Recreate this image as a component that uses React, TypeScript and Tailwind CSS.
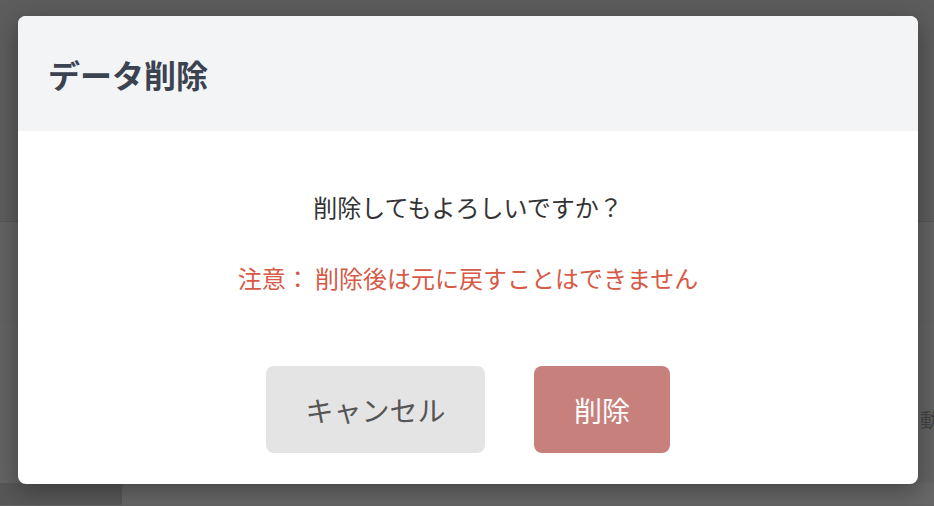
const jp = { fontFamily: '"Noto Sans CJK JP", "Noto Sans", sans-serif' };

const DeleteDialog = () => {
  return (
    <div className="absolute left-[18px] top-[16px] w-[900px] h-[468px] rounded-lg bg-white overflow-hidden shadow-[0_6px_24px_rgba(0,0,0,0.35)] flex flex-col">
      <div className="h-[115px] bg-[#f3f4f6] flex items-center px-[30px]">
        <h2 className="text-[32px] leading-none font-bold text-[#3b4250]">データ削除</h2>
      </div>
      <div className="flex-1 flex flex-col items-center pt-[59px]">
        <p className="text-[24px] leading-[34px] text-[#333]">削除してもよろしいですか？</p>
        <p className="mt-[37px] text-[24px] leading-[34px] text-[#d65a46]">
          注意： 削除後は元に戻すことはできません
        </p>
        <div className="mt-[71px] flex gap-[49px]">
          <button className="h-[87px] w-[219px] rounded-lg bg-[#e4e4e4] text-[28px] text-[#555]">
            キャンセル
          </button>
          <button className="h-[87px] w-[136px] rounded-lg bg-[#c8807c] text-[28px] text-white">
            削除
          </button>
        </div>
      </div>
    </div>
  );
};

export default function App() {
  return (
    <div className="relative w-[934px] h-[506px] overflow-hidden bg-[#636363]" style={jp}>
      <div className="h-[222px] bg-[#5d5d5d] border-b border-[#565656]" />
      <div className="h-[100px] border-b border-[#5f5f5f]" />
      <div className="h-[161px] pt-[84px]">
        <p className="pl-[900px] whitespace-nowrap text-[20px] leading-[28px] text-[#444]">：動作</p>
      </div>
      <div className="h-[22px] flex">
        <div className="w-[122px] bg-[#575757]" />
        <div className="flex-1 rounded-tl-lg bg-[#676767]" />
      </div>
      <DeleteDialog />
    </div>
  );
}
